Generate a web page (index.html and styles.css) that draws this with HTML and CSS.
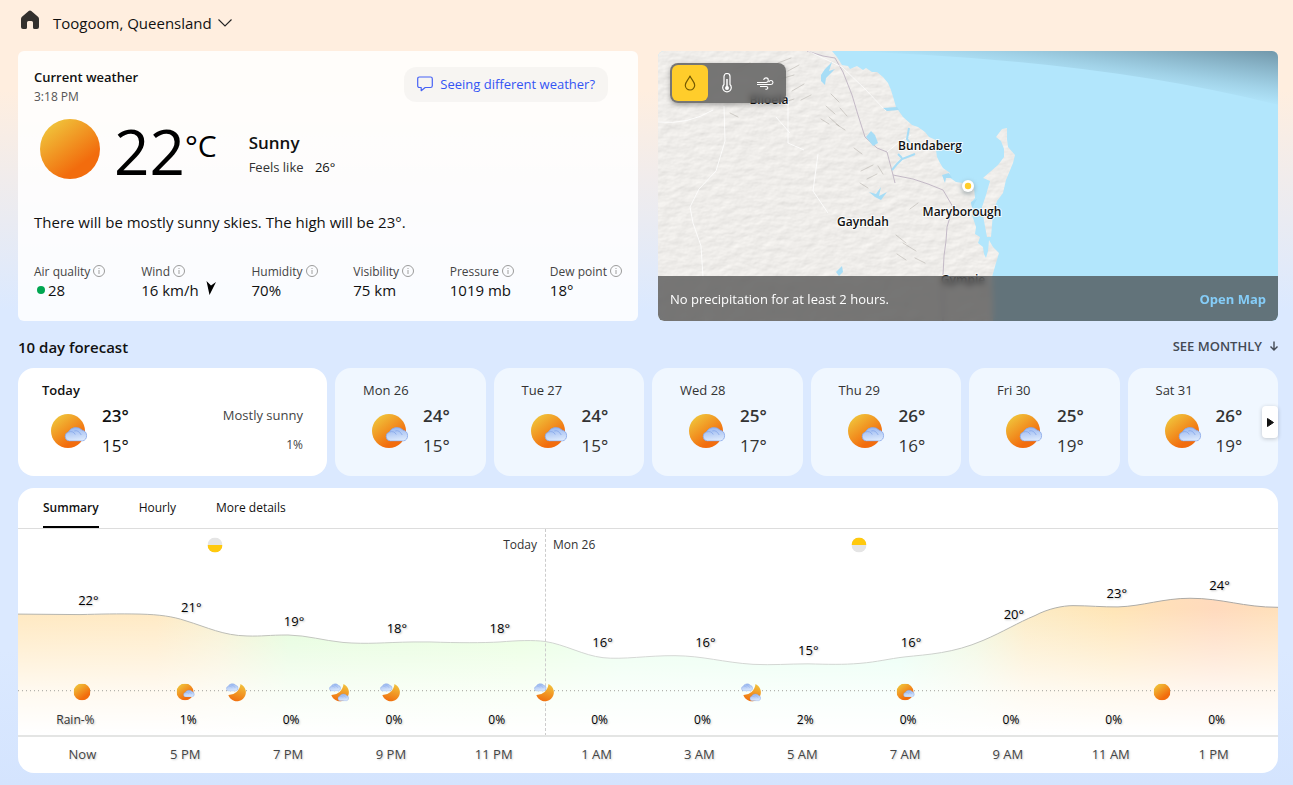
FILE: index.html
```html
<!DOCTYPE html>
<html lang="en">
<head>
<meta charset="utf-8">
<meta name="viewport" content="width=device-width, initial-scale=1">
<title>Toogoom, Queensland weather</title>
<link rel="stylesheet" href="styles.css">
</head>
<body>
<svg class="sprite" width="0" height="0" aria-hidden="true">
  <defs>
    <linearGradient id="sun-fill" x1="0.15" y1="0.1" x2="0.75" y2="0.9">
      <stop offset="0" stop-color="#f0c23a"/>
      <stop offset="0.85" stop-color="#f26c0d"/>
    </linearGradient>
    <linearGradient id="moon-fill" x1="0.7" y1="0" x2="0.4" y2="1">
      <stop offset="0" stop-color="#f2c23c"/>
      <stop offset="1" stop-color="#f0700f"/>
    </linearGradient>
    <linearGradient id="cloud-fill" x1="0" y1="0" x2="0.2" y2="1">
      <stop offset="0" stop-color="#94b5f0"/>
      <stop offset="0.55" stop-color="#b9cff6"/>
      <stop offset="1" stop-color="#d9e7fc"/>
    </linearGradient>
    <symbol id="cloud" viewBox="0 0 24 16">
      <path d="M5 15.500a4.600 4.600 0 0 1-.8-9A8 7 0 0 1 18 4.700a5.600 5.600 0 0 1 .4 10.800z" fill="url(#cloud-fill)" stroke="#86a6e8" stroke-width="0.800"/>
      <path d="M4.500 6.500Q9 5 11 9M10 5.500Q14 4 17 9.500" fill="none" stroke="#86a7e8" stroke-width="0.800"/>
    </symbol>
    <symbol id="sun" viewBox="0 0 60 60"><circle cx="30" cy="30" r="30" fill="url(#sun-fill)"/></symbol>
    <symbol id="sun-cloud" viewBox="0 0 38 34">
      <circle cx="17" cy="17" r="17" fill="url(#sun-fill)"/>
      <use href="#cloud" x="13" y="11.500" width="24.500" height="16"/>
    </symbol>
    <symbol id="moon" viewBox="0 0 20 20">
      <path d="M14.500 2A9 9 0 1 1 2.300 13A12 12 0 0 0 14.500 2z" fill="url(#moon-fill)"/>
    </symbol>
    <symbol id="moon-cloud" viewBox="0 0 20 20">
      <use href="#moon" width="20" height="20"/>
      <use href="#cloud" x="0" y="0.500" width="13" height="9"/>
    </symbol>
    <symbol id="moon-clouds" viewBox="0 0 20 20">
      <use href="#moon" width="20" height="20"/>
      <use href="#cloud" x="0" y="0.500" width="12.500" height="9"/>
      <use href="#cloud" x="8.500" y="10.500" width="12" height="9"/>
    </symbol>
    <symbol id="info" viewBox="0 0 12 12">
      <circle cx="6" cy="6" r="5.500" fill="none" stroke="#9b9b9b"/>
      <path d="M6 5v4M6 3v1" stroke="#b0b0b0" stroke-width="1.200"/>
    </symbol>
  </defs>
</svg>

<header class="topbar">
  <a class="home" href="#" aria-label="Home">
    <svg width="18" height="20" viewBox="0 0 18 20"><path d="M9 0.500Q9.700 0.500 10.300 1.100L17 6.800Q18 7.700 18 9V17Q18 19 16 19H13.500Q12 19 12 17.500V12.500Q12 11 10.500 11H7.500Q6 11 6 12.500V17.500Q6 19 4.500 19H2Q0 19 0 17V9Q0 7.700 1 6.800L7.700 1.100Q8.300 0.500 9 0.500Z" fill="#33302d"/></svg>
  </a>
  <button class="location" type="button">Toogoom, Queensland
    <svg width="14" height="8" viewBox="0 0 14 8"><path d="M0.500 0.500L7 7L13.500 0.500" fill="none" stroke="#222" stroke-width="1.100"/></svg>
  </button>
</header>

<main class="page">
  <div class="overview">
    <section class="current" aria-labelledby="current-title">
      <div class="current-head">
        <div>
          <h2 id="current-title" class="current-title">Current weather</h2>
          <p class="current-time">3:18 PM</p>
        </div>
        <button class="feedback" type="button">
          <svg width="16" height="16" viewBox="0 0 16 16"><path d="M2.500 1H13.500Q15.300 1 15.300 2.800V9.700Q15.300 11.500 13.500 11.500H8.200L4.200 14.700V11.500H2.500Q0.700 11.500 0.700 9.700V2.800Q0.700 1 2.500 1Z" fill="none" stroke="#4763f5" stroke-width="1.200" stroke-linejoin="round"/></svg>
          Seeing different weather?
        </button>
      </div>
      <div class="now">
        <svg class="now-icon" width="60" height="60"><use href="#sun"/></svg>
        <p class="now-temp">22<span class="now-unit">°C</span></p>
        <div>
          <p class="now-sky">Sunny</p>
          <p class="now-feels">Feels like <span>26°</span></p>
        </div>
      </div>
      <p class="outlook">There will be mostly sunny skies. The high will be 23°.</p>
      <dl class="metrics">
        <div><dt>Air quality <svg width="12" height="12"><use href="#info"/></svg></dt><dd><i class="aqi"></i>28</dd></div>
        <div><dt>Wind <svg width="12" height="12"><use href="#info"/></svg></dt><dd>16 km/h <svg class="wind-arrow" width="10" height="14" viewBox="0 0 10 14"><path d="M0.500 0L5 4.500L10 1L3.500 14Z" fill="#000"/></svg></dd></div>
        <div><dt>Humidity <svg width="12" height="12"><use href="#info"/></svg></dt><dd>70%</dd></div>
        <div><dt>Visibility <svg width="12" height="12"><use href="#info"/></svg></dt><dd>75 km</dd></div>
        <div><dt>Pressure <svg width="12" height="12"><use href="#info"/></svg></dt><dd>1019 mb</dd></div>
        <div><dt>Dew point <svg width="12" height="12"><use href="#info"/></svg></dt><dd>18°</dd></div>
      </dl>
    </section>

    <section class="map" aria-label="Precipitation map">
      <svg class="map-canvas" viewBox="0 0 620 270" preserveAspectRatio="xMidYMid slice" role="img" aria-label="Map of the Fraser Coast">
        <defs>
          <filter id="relief" x="0" y="0" width="100%" height="100%" color-interpolation-filters="sRGB">
            <feTurbulence type="fractalNoise" baseFrequency="0.07 0.13" numOctaves="4" seed="8" result="noise"/>
            <feDiffuseLighting in="noise" surfaceScale="0.300" diffuseConstant="1.130" lighting-color="#efedea" result="light">
              <feDistantLight azimuth="230" elevation="62"/>
            </feDiffuseLighting>
            <feComposite in="light" in2="SourceGraphic" operator="in"/>
          </filter>
          <filter id="soft" x="-50%" y="-50%" width="200%" height="200%"><feGaussianBlur stdDeviation="2"/></filter>
          <linearGradient id="edge-shade" gradientUnits="userSpaceOnUse" x1="613" y1="54" x2="620" y2="0">
            <stop offset="0" stop-color="#56788a" stop-opacity="0"/>
            <stop offset="0.300" stop-color="#56788a" stop-opacity="0.180"/>
            <stop offset="1" stop-color="#4f6d7e" stop-opacity="0.650"/>
          </linearGradient>
        </defs>
        <rect width="620" height="270" fill="#b2e6fc"/>
        <g filter="url(#relief)">
          <path d="M0 0H174L179 6L184 14L190 15L192 18L199 15L205 19L208 17L214 21L219 21L225 26L230 32L233 39L236 49L238 56L245 66L254 74L260 76L267 81L271 86L278 89L278 99L279 106L282 112L285 117L292 122L291 126L298 131L305 132L316 137L317 147L313 152L315 159L314 164L318 176L317 183L322 186L320 192L325 196L326 203L328 207L330 200L331 189L335 196L341 202L338 212L336 219L334 226L335 250L335 270H0Z"/>
          <path d="M349 77L344 78L338 86L343 90L346 98L346 106L340 114L325 127L332 130L328 144L324 156L326 170L329 186H333L335 162L339 150L345 142L348 129L355 112L357 104L350 96L349 88Z"/>
        </g>
        <g fill="none" stroke="#9e9890" stroke-linecap="round" opacity="0.400">
          <path d="M120 12l13-5M130 20l11-6M122 28l14-4M134 40l12-7M143 49l10-5M124 52l12-4M168 55l9 8M171 66l10 9M173 43l8 8M178 73l9 6M163 68l8 5M182 57l7 8M196 97l8 6M203 120l12-6M209 128l10-5M202 132l8 5M220 115l5 8M238 184l10 8M245 192l13 8M239 203l9 6M257 207l10 5M252 158l8-6M78 18l14-6M72 62l8 4"/>
        </g>
        <g fill="none" stroke="#fff" stroke-opacity="0.800">
          <path d="M66 55L67 90L58 120L41 138L32 156L35 172L43 195L45 226L48 270"/>
          <path d="M0 71Q30 74 55 59M130 50V92L146 99M160 103L155 140L170 162M118 66L132 82"/>
        </g>
        <path d="M149 0L165 5L177 7L185 21L194 44L200 64L207 86L219 97L229 101L235 124L255 128L270 133L285 139L295 156L289 176L288 190L286 205L285 224V270M235 124L237 132" fill="none" stroke="#c3b9c6"/>
        <path d="M150 0L184 16L207 38L228 60M229 101L240 92L253 84" fill="none" stroke="#fff" stroke-opacity="0.700"/>
        <g fill="#a7ddf6">
          <path d="M163 24L167 18L174 11L171 20L177 18L168 27L167 34L163 30Z"/>
          <path d="M208 86L213 80L217 84L220 92L215 95Z"/>
          <path d="M211 141L218 143L223 136L221 145L229 141L223 149L217 146Z"/>
          <path d="M178 221L184 215L185 221L181 225Z"/>
          <path d="M225 57L239 56L241 59L229 60Z"/>
          <path d="M284 124L291 122L294 127L288 127L287 132Z"/>
          <path d="M313 151L319 148L314 157Z"/>
        </g>
        <path d="M251 77L249 88L252 92M257 103L244 108L239 113L234 119M244 107L240 103" fill="none" stroke="#a7ddf6" stroke-width="2"/>
        <path d="M180 0Q440 8 620 54V0Z" fill="url(#edge-shade)"/>
        <g class="map-labels" text-anchor="middle">
          <text x="111" y="53">Biloela</text>
          <text x="272" y="99">Bundaberg</text>
          <text x="205" y="175">Gayndah</text>
          <text x="304" y="165">Maryborough</text>
          <text x="305" y="233">Gympie</text>
        </g>
        <circle cx="310" cy="137" r="7" fill="#7a8a90" opacity="0.500" filter="url(#soft)"/>
        <circle cx="310" cy="135" r="6" fill="#fff"/>
        <circle cx="310" cy="135" r="3.200" fill="#ffcd2b"/>
      </svg>
      <div class="layers" role="group" aria-label="Map layers">
        <button class="layer layer-active" type="button" aria-label="Precipitation"><svg width="12" height="16" viewBox="0 0 12 16"><path d="M6 1C5 4 1.300 7 1.300 10.300A4.700 4.700 0 0 0 10.700 10.300C10.700 7 7 4 6 1Z" fill="none" stroke="#755a00" stroke-width="1.200" stroke-linejoin="round"/></svg></button>
        <button class="layer" type="button" aria-label="Temperature"><svg width="10" height="20" viewBox="0 0 10 20"><path d="M2 11.500V3.500A3 3 0 0 1 8 3.500V11.500A4.300 4.300 0 1 1 2 11.500Z" fill="none" stroke="#fff" stroke-width="1.200"/><circle cx="5" cy="15" r="2" fill="#fff"/><path d="M5 15V6" stroke="#fff" stroke-width="1.500"/></svg></button>
        <button class="layer" type="button" aria-label="Wind"><svg width="17" height="13" viewBox="0 0 17 13"><path d="M0 5.500H9A2.300 2.300 0 1 0 6.700 3M0 7.500H14A2 2 0 1 0 12 5.300M3 9.500H9.500A1.400 1.400 0 1 1 8.500 12" fill="none" stroke="#fff" stroke-width="1.100"/></svg></button>
      </div>
      <div class="map-bar">
        <p>No precipitation for at least 2 hours.</p>
        <a href="#">Open Map</a>
      </div>
    </section>
  </div>

  <section aria-labelledby="forecast-title">
    <div class="forecast-head">
      <h2 id="forecast-title">10 day forecast</h2>
      <a class="monthly" href="#">SEE MONTHLY <svg width="8" height="10" viewBox="0 0 8 10"><path d="M4 0.500V9M0.500 5.500L4 9L7.500 5.500" fill="none" stroke="#444a54" stroke-width="1.400"/></svg></a>
    </div>
    <div class="days">
      <article class="day day-today">
        <h3>Today</h3>
        <div class="day-body"><svg width="38" height="34"><use href="#sun-cloud"/></svg><p class="temps"><b>23°</b><span>15°</span></p><p class="day-note"><span>Mostly sunny</span><small>1%</small></p></div>
      </article>
      <article class="day"><h3>Mon 26</h3><div class="day-body"><svg width="38" height="34"><use href="#sun-cloud"/></svg><p class="temps"><b>24°</b><span>15°</span></p></div></article>
      <article class="day"><h3>Tue 27</h3><div class="day-body"><svg width="38" height="34"><use href="#sun-cloud"/></svg><p class="temps"><b>24°</b><span>15°</span></p></div></article>
      <article class="day"><h3>Wed 28</h3><div class="day-body"><svg width="38" height="34"><use href="#sun-cloud"/></svg><p class="temps"><b>25°</b><span>17°</span></p></div></article>
      <article class="day"><h3>Thu 29</h3><div class="day-body"><svg width="38" height="34"><use href="#sun-cloud"/></svg><p class="temps"><b>26°</b><span>16°</span></p></div></article>
      <article class="day"><h3>Fri 30</h3><div class="day-body"><svg width="38" height="34"><use href="#sun-cloud"/></svg><p class="temps"><b>25°</b><span>19°</span></p></div></article>
      <article class="day"><h3>Sat 31</h3><div class="day-body"><svg width="38" height="34"><use href="#sun-cloud"/></svg><p class="temps"><b>26°</b><span>19°</span></p></div></article>
      <button class="next" type="button" aria-label="Next days"><svg width="7" height="9" viewBox="0 0 7 9"><path d="M0.500 0.500L6.500 4.500L0.500 8.500Z" fill="#111" stroke="#111" stroke-linejoin="round"/></svg></button>
    </div>
  </section>

  <section class="details" aria-label="Hourly details">
    <nav class="tabs">
      <button class="tab tab-active" type="button">Summary</button>
      <button class="tab" type="button">Hourly</button>
      <button class="tab" type="button">More details</button>
    </nav>
    <div class="chart">
      <svg class="chart-area" viewBox="0 0 1260 207" preserveAspectRatio="none" aria-hidden="true">
        <defs>
          <linearGradient id="heat">
            <stop offset="0" stop-color="#ffe8bf"/><stop offset="0.110" stop-color="#ffe9c2"/><stop offset="0.160" stop-color="#f7f0d0"/>
            <stop offset="0.215" stop-color="#e2fcd9"/><stop offset="0.400" stop-color="#e6ffdb"/><stop offset="0.480" stop-color="#e6ffec"/>
            <stop offset="0.700" stop-color="#e2fff0"/><stop offset="0.760" stop-color="#eff6dc"/><stop offset="0.800" stop-color="#fcebc4"/>
            <stop offset="0.870" stop-color="#ffe5b6"/><stop offset="0.950" stop-color="#ffdabd"/><stop offset="1" stop-color="#ffe0ba"/>
          </linearGradient>
          <linearGradient id="fade" gradientUnits="userSpaceOnUse" x1="0" y1="80" x2="0" y2="205">
            <stop offset="0" stop-color="#fff" stop-opacity="0"/><stop offset="0.650" stop-color="#fff" stop-opacity="0.750"/><stop offset="1" stop-color="#fff"/>
          </linearGradient>
          <linearGradient id="trend" gradientUnits="userSpaceOnUse" x1="0" y1="0" x2="1260" y2="0">
            <stop offset="0" stop-color="#b3b3ad"/><stop offset="0.130" stop-color="#b8b8b2"/><stop offset="0.300" stop-color="#cacfc9"/>
            <stop offset="0.500" stop-color="#d6d8d6"/><stop offset="0.720" stop-color="#d0d4d0"/><stop offset="0.800" stop-color="#b0b0aa"/><stop offset="1" stop-color="#aaa6a2"/>
          </linearGradient>
          <path id="trend-line" d="M0 85.500L62 86C82 85.500 100 85 122 85.500C142 86 155 88 167 92C190 99 205 107 229 107.500C245 108 250 106.500 270 106.500C290 107 305 112 325 114C350 116 365 114 395 113.500L412 113.500C440 114.500 465 114.500 482 113.500C500 112 515 111.500 527 113C547 116 565 127 585 129.300C605 131.500 630 127 657 127.300C685 127.500 705 134 735 136C755 137 770 135.500 790 135.500C810 136 825 136.500 842 135C860 133.500 870 130.500 887 128.500C910 126 935 125 965 112C985 103.500 1000 94 1017 87C1030 80 1045 77 1055 77C1070 77 1085 78.500 1100 78.300C1125 77.500 1145 69.600 1172 69.600C1205 69.600 1225 78.700 1260 78.700"/>
          <clipPath id="below"><path d="M0 85.500L62 86C82 85.500 100 85 122 85.500C142 86 155 88 167 92C190 99 205 107 229 107.500C245 108 250 106.500 270 106.500C290 107 305 112 325 114C350 116 365 114 395 113.500L412 113.500C440 114.500 465 114.500 482 113.500C500 112 515 111.500 527 113C547 116 565 127 585 129.300C605 131.500 630 127 657 127.300C685 127.500 705 134 735 136C755 137 770 135.500 790 135.500C810 136 825 136.500 842 135C860 133.500 870 130.500 887 128.500C910 126 935 125 965 112C985 103.500 1000 94 1017 87C1030 80 1045 77 1055 77C1070 77 1085 78.500 1100 78.300C1125 77.500 1145 69.600 1172 69.600C1205 69.600 1225 78.700 1260 78.700V207H0Z"/></clipPath>
        </defs>
        <g clip-path="url(#below)"><rect width="1260" height="207" fill="url(#heat)"/><rect width="1260" height="207" fill="url(#fade)"/></g>
        <use href="#trend-line" fill="none" stroke="url(#trend)"/>
        <path d="M0 162.500H1260" stroke="#a0a09b" stroke-dasharray="1 3"/>
        <path d="M527.500 0V207" stroke="#ccc" stroke-dasharray="3 2"/>
      </svg>
      <p class="split split-before" style="right:58.17%">Today</p>
      <p class="split split-after" style="left:41.83%">Mon 26</p>
      <svg class="twilight" style="left:15.6%" width="15" height="15" viewBox="0 0 15 15" role="img" aria-label="Sunset"><circle cx="7.500" cy="7.500" r="7.500" fill="#e5e5e5"/><path d="M0 7.500A7.500 7.500 0 0 0 15 7.500Z" fill="#ffc90e"/></svg>
      <svg class="twilight" style="left:66.75%" width="15" height="15" viewBox="0 0 15 15" role="img" aria-label="Sunrise"><circle cx="7.500" cy="7.500" r="7.500" fill="#e5e5e5"/><path d="M0 7.500A7.500 7.500 0 0 1 15 7.500Z" fill="#ffc90e"/></svg>
      <ol class="marks marks-temp">
        <li style="padding-top:61px">22°</li><li style="padding-top:68px">21°</li><li style="padding-top:82px">19°</li><li style="padding-top:89px">18°</li><li style="padding-top:89px">18°</li><li style="padding-top:103px">16°</li><li style="padding-top:103px">16°</li><li style="padding-top:111px">15°</li><li style="padding-top:103px">16°</li><li style="padding-top:75px">20°</li><li style="padding-top:54px">23°</li><li style="padding-top:46px">24°</li>
      </ol>
      <svg class="sky" style="left:5.08%" width="17" height="17"><use href="#sun"/></svg>
      <svg class="sky" style="left:13.35%" width="19" height="17"><use href="#sun-cloud"/></svg>
      <svg class="sky" style="left:17.3%" width="20" height="20"><use href="#moon-cloud"/></svg>
      <svg class="sky" style="left:25.5%" width="20" height="20"><use href="#moon-clouds"/></svg>
      <svg class="sky" style="left:29.55%" width="20" height="20"><use href="#moon-cloud"/></svg>
      <svg class="sky" style="left:41.75%" width="20" height="20"><use href="#moon-cloud"/></svg>
      <svg class="sky" style="left:58.15%" width="20" height="20"><use href="#moon-clouds"/></svg>
      <svg class="sky" style="left:70.45%" width="19" height="17"><use href="#sun-cloud"/></svg>
      <svg class="sky" style="left:90.8%" width="17" height="17"><use href="#sun"/></svg>
      <ol class="marks marks-rain">
        <li class="rain-key">Rain-%</li><li>1%</li><li>0%</li><li>0%</li><li>0%</li><li>0%</li><li>0%</li><li>2%</li><li>0%</li><li>0%</li><li>0%</li><li>0%</li>
      </ol>
    </div>
    <ol class="hours">
      <li>Now</li><li>5 PM</li><li>7 PM</li><li>9 PM</li><li>11 PM</li><li>1 AM</li><li>3 AM</li><li>5 AM</li><li>7 AM</li><li>9 AM</li><li>11 AM</li><li>1 PM</li>
    </ol>
  </section>
</main>
</body>
</html>
```
FILE: styles.css
```css
* {
  box-sizing: border-box;
}

body {
  margin: 0;
  min-height: 100vh;
  font-family: "Open Sans", "Noto Sans", sans-serif;
  font-size: 13px;
  line-height: 20px;
  color: #111;
  background: linear-gradient(180deg, #ffeedf 90px, #dbe9ff 310px, #dbe9ff 650px, #d4e4fe 100%);
}

h2, h3, p, dl, dd, ol {
  margin: 0;
  padding: 0;
}

ol {
  list-style: none;
}

button {
  font: inherit;
  color: inherit;
  border: 0;
  padding: 0;
  background: none;
  cursor: pointer;
}

svg {
  flex: none;
}

.sprite {
  position: absolute;
}

.topbar {
  display: flex;
  align-items: center;
  gap: 14px;
  padding: 0 21px;
  height: 46px;
}

.home {
  height: 26px;
}

.location {
  display: flex;
  align-items: center;
  gap: 6px;
  font-size: 15px;
}

.page {
  padding: 5px 15px 12px 18px;
}

.overview {
  display: grid;
  grid-template-columns: 1fr 1fr;
  gap: 20px;
}

.current {
  padding: 16px 16px 22px;
  border-radius: 6px;
  background: rgba(255, 255, 255, 0.85);
}

.current-head {
  display: flex;
  justify-content: space-between;
  align-items: flex-start;
  padding-right: 14px;
  height: 40px;
}

.current-title {
  font-size: 13px;
  font-weight: 600;
}

.current-time {
  font-size: 12px;
  color: #555;
}

.feedback {
  display: flex;
  align-items: center;
  gap: 7px;
  height: 35px;
  padding: 0 13px 2px;
  border-radius: 12px;
  background: rgba(0, 0, 0, 0.03);
  color: #3454f4;
}

.now {
  display: flex;
  align-items: center;
  margin-top: 12px;
  padding-left: 6px;
  height: 60px;
}

.now-temp {
  display: flex;
  align-items: flex-start;
  margin: 4px 32px 0 14px;
  font-size: 62px;
  line-height: 64px;
  color: #000;
}

.now-unit {
  font-size: 30px;
  line-height: 54px;
}

.now-sky {
  margin-top: 12px;
  font-size: 17px;
  font-weight: 600;
  line-height: 24px;
}

.now-feels {
  line-height: 24px;
  color: #333;
}

.now-feels span {
  margin-left: 8px;
  color: #111;
}

.outlook {
  margin-top: 31px;
  font-size: 15px;
  line-height: 24px;
}

.metrics {
  display: flex;
  justify-content: space-between;
  margin-top: 29px;
}

.metrics dt {
  display: flex;
  gap: 3px;
  font-size: 12px;
  line-height: 18px;
  color: #444;
}

.metrics dt svg {
  margin-top: 2px;
}

.metrics dd {
  display: flex;
  align-items: center;
  height: 18px;
  font-size: 15px;
  line-height: 18px;
}

.wind-arrow {
  margin: 0 0 4px 7px;
}

.aqi {
  width: 8px;
  height: 8px;
  margin: 0 3px;
  border-radius: 50%;
  background: #00a651;
}

.map {
  position: relative;
  display: flex;
  align-items: flex-end;
  min-height: 270px;
  border-radius: 6px;
  overflow: hidden;
}

.map-canvas {
  position: absolute;
  inset: 0;
  width: 100%;
  height: 100%;
}

.map-labels {
  font-size: 12px;
  font-weight: 600;
  fill: #111;
  stroke: rgba(255, 255, 255, 0.8);
  stroke-width: 2px;
  paint-order: stroke;
}

.layers {
  position: absolute;
  top: 12px;
  left: 12px;
  display: flex;
  padding: 2px;
  border-radius: 8px;
  background: rgba(70, 70, 70, 0.72);
  backdrop-filter: blur(3px);
  box-shadow: 0 2px 5px rgba(0, 0, 0, 0.3);
}

.layer {
  display: grid;
  place-items: center;
  width: 38px;
  height: 36px;
  border-radius: 6px;
}

.layer-active {
  width: 36px;
  background: #ffcd2b;
}

.map-bar {
  position: relative;
  display: flex;
  justify-content: space-between;
  align-items: center;
  width: 100%;
  height: 45px;
  padding: 0 12px;
  color: #fff;
  background: rgba(60, 60, 60, 0.68);
  backdrop-filter: blur(3px);
}

.map-bar p {
  font-weight: 500;
}

.map-bar a {
  font-weight: 700;
  color: #85cdf8;
  text-decoration: none;
}

.forecast-head {
  display: flex;
  justify-content: space-between;
  align-items: center;
  height: 47px;
  padding-top: 5px;
}

.forecast-head h2 {
  font-size: 15px;
  font-weight: 600;
}

.monthly {
  display: flex;
  align-items: center;
  gap: 8px;
  padding-bottom: 3px;
  font-weight: 600;
  color: #444a54;
  text-decoration: none;
}

.days {
  position: relative;
  display: grid;
  grid-template-columns: 618fr repeat(6, 301fr);
  gap: 8px;
}

.day {
  padding: 12px 0 14px 28px;
  border-radius: 16px;
  background: #f0f7ff;
  color: #333;
}

.day-today {
  padding: 12px 24px 14px;
  background: #fff;
  color: #111;
}

.day h3 {
  font-size: 13px;
  font-weight: 400;
}

.day-today h3 {
  font-weight: 600;
}

.day-body {
  display: flex;
  align-items: center;
  gap: 13px;
  height: 60px;
  margin-top: 2px;
  padding-left: 9px;
}

.day-body svg {
  margin-bottom: 2px;
}

.temps,
.day-note {
  display: flex;
  flex-direction: column;
  line-height: 30px;
}

.temps {
  margin-bottom: 2px;
  font-size: 17px;
}

.temps b {
  font-weight: 600;
}

.day-note {
  margin: 0 0 4px auto;
  text-align: right;
  color: #444;
}

.day-note small {
  font-size: 12px;
}

.next {
  position: absolute;
  top: 38px;
  right: 0;
  display: grid;
  place-items: center;
  width: 16px;
  height: 32px;
  border-radius: 4px;
  background: #fff;
  box-shadow: 0 1px 4px rgba(0, 0, 0, 0.2);
}

.details {
  margin-top: 12px;
  border-radius: 16px;
  background: #fff;
  overflow: hidden;
}

.tabs {
  display: flex;
  gap: 40px;
  height: 41px;
  padding: 0 25px;
  border-bottom: 1px solid #ddd;
}

.tab {
  height: 40px;
  border-top: 2px solid transparent;
  border-bottom: 2px solid transparent;
  font-size: 12px;
}

.tab-active {
  font-weight: 600;
  border-bottom-color: #000;
}

.chart {
  position: relative;
  display: flex;
  flex-direction: column;
  height: 208px;
  border-bottom: 2px solid #e4e5e4;
}

.chart-area {
  position: absolute;
  width: 100%;
  height: 100%;
}

.split {
  position: absolute;
  top: 6px;
  font-size: 12px;
  color: #333;
}

.split-before {
  margin-right: 8px;
}

.split-after {
  margin-left: 8px;
}

.twilight,
.sky {
  position: absolute;
  top: 16px;
  transform: translate(-50%, -50%);
}

.sky {
  top: 163px;
}

.marks,
.hours {
  display: grid;
  grid-template-columns: repeat(12, 1fr);
  text-align: center;
}

.marks {
  position: relative;
  text-shadow: 1px 1px 2px rgba(0, 0, 0, 0.25);
  color: #000;
}

.marks-temp {
  flex: 1;
  padding: 0 7px 0 19px;
}

.marks-rain {
  padding: 0 10px 5px 16px;
  font-size: 12px;
}

.rain-key {
  padding-right: 20px;
  color: #333;
}

.hours {
  padding: 7px 13px 9px;
  color: #444;
  text-shadow: 1px 1px 2px rgba(0, 0, 0, 0.2);
}
```
